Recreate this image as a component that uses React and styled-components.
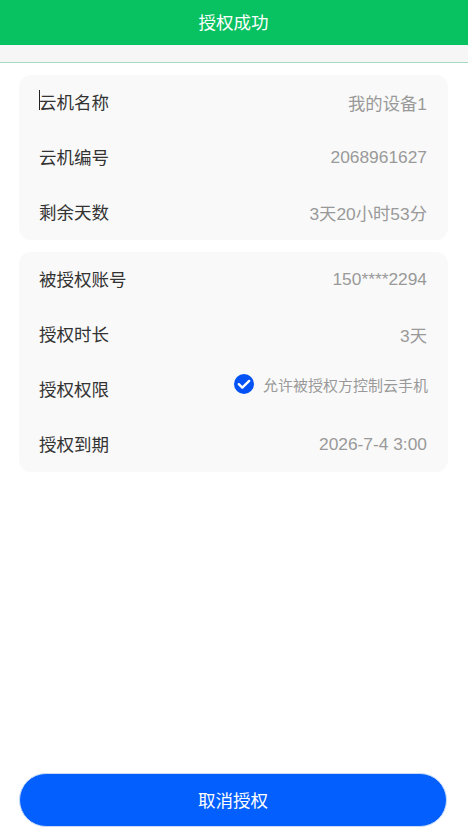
import React from "react";
import styled, { createGlobalStyle } from "styled-components";

const GlobalStyle = createGlobalStyle`
  html, body { margin: 0; padding: 0; background: #fff; }
  body { font-family: "Liberation Sans", Arial, "Noto Sans CJK SC", sans-serif; }
  * { box-sizing: border-box; }
`;

const Page = styled.div`
  width: 468px;
  height: 834px;
  display: flex;
  flex-direction: column;
`;

const Header = styled.header`
  height: 45px;
  padding: 0 1px 2px 0;
  background: #08c160;
  color: #fff;
  font-size: 17.5px;
  display: flex;
  align-items: center;
  justify-content: center;
`;

const HeaderGap = styled.div`
  height: 18px;
  background: #f6f6f6;
  border-bottom: 1px solid #a5dcc0;
`;

const Content = styled.main`
  flex: 1;
  padding: 12px 20px 0 19px;
  display: flex;
  flex-direction: column;
  gap: 12px;
`;

const Card = styled.section`
  background: #f9f9f9;
  border-radius: 12px;
  padding: 0 21px 0 20px;
`;

const Row = styled.div`
  height: 55px;
  padding-bottom: 2px;
  display: flex;
  align-items: center;
  justify-content: space-between;
`;

const Label = styled.span`
  position: relative;
  font-size: 17.5px;
  color: #333;

  ${(p) =>
    p.$caret &&
    `
    &::before {
      content: "";
      position: absolute;
      left: 0;
      top: 1px;
      width: 1px;
      height: 20px;
      background: #222;
    }
  `}
`;

const Value = styled.span`
  padding-top: 2px;
  font-size: 17.35px;
  color: #999;
`;

const Permission = styled.span`
  display: flex;
  align-items: center;
  gap: 9px;
  font-size: 15px;
  color: #999;
  margin: -9px -1px 0 0;
`;

const Footer = styled.footer`
  padding: 0 21px 7px 19px;
`;

const CancelButton = styled.button`
  width: 100%;
  height: 54px;
  padding: 0 0 2px;
  border: 1px solid #c9dcf8;
  border-radius: 27px;
  background: #045fff;
  color: #fff;
  font: inherit;
  font-size: 17.5px;
`;

const CheckIcon = () => (
  <svg width="20" height="20" viewBox="0 0 20 20" aria-hidden="true">
    <circle cx="10" cy="10" r="10" fill="#0452f5" />
    <path d="M4.8 10.2l3.5 3.4L15.2 6.9" fill="none" stroke="#fff" strokeWidth="2.4" strokeLinecap="round" strokeLinejoin="round" />
  </svg>
);

export default function App() {
  return (
    <Page>
      <GlobalStyle />
      <Header>授权成功</Header>
      <HeaderGap />
      <Content>
        <Card>
          <Row><Label $caret>云机名称</Label><Value>我的设备1</Value></Row>
          <Row><Label>云机编号</Label><Value>2068961627</Value></Row>
          <Row><Label>剩余天数</Label><Value>3天20小时53分</Value></Row>
        </Card>
        <Card>
          <Row><Label>被授权账号</Label><Value>150****2294</Value></Row>
          <Row><Label>授权时长</Label><Value>3天</Value></Row>
          <Row>
            <Label>授权权限</Label>
            <Permission><CheckIcon />允许被授权方控制云手机</Permission>
          </Row>
          <Row><Label>授权到期</Label><Value>2026-7-4 3:00</Value></Row>
        </Card>
      </Content>
      <Footer><CancelButton>取消授权</CancelButton></Footer>
    </Page>
  );
}
